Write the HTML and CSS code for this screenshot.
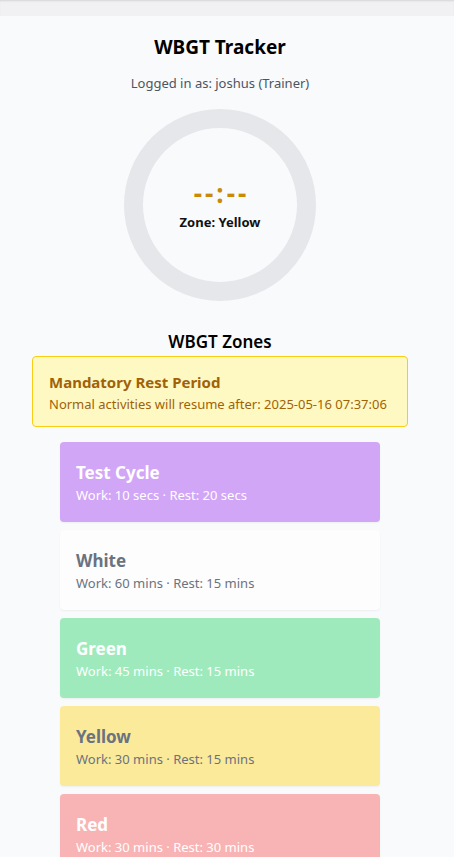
FILE: index.html
```html
<!DOCTYPE html>
<html>
<head>
<meta charset="utf-8">
<link rel="stylesheet" href="styles.css">
</head>
<body>
<div class="topbar"></div>
<main class="app">
  <h1 class="title">WBGT Tracker</h1>
  <p class="user">Logged in as: joshus (Trainer)</p>
  <div class="ring">
    <div class="timer">--:--</div>
    <div class="zone-label">Zone: Yellow</div>
  </div>
  <h2 class="section">WBGT Zones</h2>
  <div class="alert">
    <div class="alert-title">Mandatory Rest Period</div>
    <div class="alert-text">Normal activities will resume after: 2025-05-16 07:37:06</div>
  </div>
  <div class="cards">
    <div class="card purple"><div class="card-title">Test Cycle</div><div class="card-sub">Work: 10 secs · Rest: 20 secs</div></div>
    <div class="card white"><div class="card-title">White</div><div class="card-sub">Work: 60 mins · Rest: 15 mins</div></div>
    <div class="card green"><div class="card-title">Green</div><div class="card-sub">Work: 45 mins · Rest: 15 mins</div></div>
    <div class="card yellow"><div class="card-title">Yellow</div><div class="card-sub">Work: 30 mins · Rest: 15 mins</div></div>
    <div class="card red"><div class="card-title">Red</div><div class="card-sub">Work: 30 mins · Rest: 30 mins</div></div>
  </div>
</main>
</body>
</html>
```
FILE: styles.css
```css
html, body {
  margin: 0;
  padding: 0;
  background: #f9fafb;
  font-family: "Segoe UI", "Noto Sans", "Liberation Sans", sans-serif;
  overflow: hidden;
}
.topbar {
  height: 16px;
  background: #f1f1f3;
  box-shadow: inset 0 2px 2px -1px #d4d4d8;
}
.app {
  width: 440px;
  display: flex;
  flex-direction: column;
  align-items: center;
}
.title {
  margin: 19px 0 0;
  font-size: 19px;
  line-height: 24px;
  font-weight: 700;
  color: #000;
}
.user {
  margin: 15px 0 0;
  font-size: 13px;
  line-height: 18px;
  color: #4b5563;
}
.ring {
  margin-top: 17px;
  width: 154px;
  height: 154px;
  border: 19px solid #e5e7eb;
  border-radius: 50%;
  display: flex;
  flex-direction: column;
  align-items: center;
  justify-content: center;
}
.timer {
  font-size: 26px;
  line-height: 28px;
  font-weight: 700;
  color: #ca8a04;
  letter-spacing: 3px;
  margin-left: 3px;
  margin-top: 6px;
}
.zone-label {
  margin-top: 6px;
  margin-bottom: 6px;
  font-size: 13px;
  line-height: 18px;
  font-weight: 700;
  color: #111;
}
.section {
  margin: 30px 0 0;
  font-size: 17px;
  line-height: 22px;
  font-weight: 600;
  color: #000;
}
.alert {
  align-self: stretch;
  margin: 3px 32px 0;
  padding: 15px 16px 13px;
  background: #fef9c3;
  border: 1px solid #facc15;
  border-radius: 4px;
}
.alert-title {
  font-size: 15px;
  line-height: 20px;
  font-weight: 700;
  color: #a16207;
}
.alert-text {
  margin-top: 3px;
  font-size: 13px;
  line-height: 18px;
  color: #a16207;
}
.cards {
  align-self: stretch;
  margin: 15px 60px 0;
  display: flex;
  flex-direction: column;
  gap: 8px;
}
.card {
  height: 80px;
  box-sizing: border-box;
  padding: 20px 16px 0;
  border-radius: 4px;
  color: #fff;
  box-shadow: 0 1px 2px rgba(0, 0, 0, 0.05);
}
.card-title {
  font-size: 17px;
  line-height: 22px;
  font-weight: 700;
}
.card-sub {
  margin-top: 2px;
  font-size: 13px;
  line-height: 18px;
}
.purple { background: #d1a6f7; }
.white { background: #fdfdfd; color: #6b7280; }
.green { background: #9feabc; }
.yellow { background: #fcea9b; color: #6b7280; }
.red { background: #f8b4b4; }
```
